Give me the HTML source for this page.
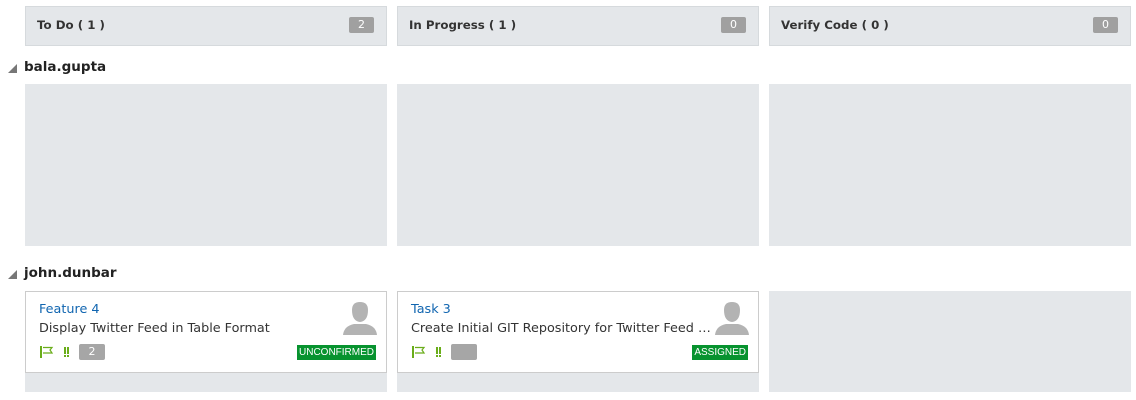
<!DOCTYPE html>
<html><head><style>
body{margin:0;width:1136px;height:400px;background:#fff;font-family:"DejaVu Sans","Liberation Sans",sans-serif;position:relative;overflow:hidden}
.a{position:absolute}
.hdr{top:6px;height:38px;width:360px;background:#e4e7ea;border:1px solid #d6dadd;box-sizing:content-box}
.hdr b{position:absolute;left:11px;top:11px;font-size:11.8px;color:#333}
.cnt{position:absolute;right:12px;top:10px;background:#a0a0a0;color:#fff;font-size:11px;width:25px;text-align:center;height:16px;border-radius:2px;line-height:15px}
.lane{background:#e4e7ea;width:362px}
.lbl{font-size:13.5px;font-weight:bold;color:#222}
.tri{width:0;height:0;border-left:9px solid transparent;border-bottom:9px solid #777}
.card{background:#fff;border:1px solid #ccc;width:360px;height:82px;box-sizing:border-box}
.card .t{position:absolute;left:13px;top:10px;font-size:12.8px;color:#1065b0}
.card .d{position:absolute;left:13px;top:29px;font-size:12.8px;color:#333;white-space:nowrap}
.st{position:absolute;right:10px;top:53px;background:#07932f;color:#fff;font-family:"Liberation Sans",sans-serif;font-size:10px;padding:1px 2px;line-height:13px}
.pill{position:absolute;left:53px;top:52px;width:26px;height:16px;background:#a6a6a6;border-radius:2px;color:#fff;font-size:11px;text-align:center;line-height:16px}
</style></head><body>
<div class="a hdr" style="left:25px"><b>To Do ( 1 )</b><span class="cnt">2</span></div>
<div class="a hdr" style="left:397px"><b>In Progress ( 1 )</b><span class="cnt">0</span></div>
<div class="a hdr" style="left:769px"><b>Verify Code ( 0 )</b><span class="cnt">0</span></div>

<div class="a tri" style="left:8px;top:64px"></div>
<div class="a lbl" style="left:24px;top:59px">bala.gupta</div>
<div class="a lane" style="left:25px;top:84px;height:162px"></div>
<div class="a lane" style="left:397px;top:84px;height:162px"></div>
<div class="a lane" style="left:769px;top:84px;height:162px"></div>

<div class="a tri" style="left:8px;top:270px"></div>
<div class="a lbl" style="left:24px;top:265px">john.dunbar</div>
<div class="a lane" style="left:25px;top:291px;height:101px"></div>
<div class="a lane" style="left:397px;top:291px;height:101px"></div>
<div class="a lane" style="left:769px;top:291px;height:101px"></div>

<div class="a card" style="left:25px;top:291px;width:362px">
<div class="t">Feature 4</div><div class="d">Display Twitter Feed in Table Format</div>
<svg class="a" style="left:316px;top:9px" width="36" height="36" viewBox="0 0 36 36"><path d="M10 9 Q10 1 18 1 Q26 1 26 9 Q26 20 18 21 Q10 20 10 9Z" fill="#b3b3b3"/><path d="M1 34 Q2 25 12 23 L24 23 Q34 25 35 34 Z" fill="#b3b3b3"/></svg>
<svg class="a" style="left:14px;top:54px" width="14" height="12"><rect x="0" y="0" width="2" height="12" fill="#6aad1a"/><path d="M3 1.5 H12 L10 4 L12 7 H3" fill="none" stroke="#6aad1a" stroke-width="1.2"/></svg>
<svg class="a" style="left:38px;top:55px" width="6" height="11"><rect x="0" y="0" width="2" height="7" fill="#6aad1a"/><rect x="3" y="0" width="2" height="7" fill="#6aad1a"/><rect x="0" y="8" width="2" height="2" fill="#6aad1a"/><rect x="3" y="8" width="2" height="2" fill="#6aad1a"/></svg>
<div class="pill">2</div><div class="st">UNCONFIRMED</div>
</div>

<div class="a card" style="left:397px;top:291px;width:362px">
<div class="t">Task 3</div><div class="d">Create Initial GIT Repository for Twitter Feed …</div>
<svg class="a" style="left:316px;top:9px" width="36" height="36" viewBox="0 0 36 36"><path d="M10 9 Q10 1 18 1 Q26 1 26 9 Q26 20 18 21 Q10 20 10 9Z" fill="#b3b3b3"/><path d="M1 34 Q2 25 12 23 L24 23 Q34 25 35 34 Z" fill="#b3b3b3"/></svg>
<svg class="a" style="left:14px;top:54px" width="14" height="12"><rect x="0" y="0" width="2" height="12" fill="#6aad1a"/><path d="M3 1.5 H12 L10 4 L12 7 H3" fill="none" stroke="#6aad1a" stroke-width="1.2"/></svg>
<svg class="a" style="left:38px;top:55px" width="6" height="11"><rect x="0" y="0" width="2" height="7" fill="#6aad1a"/><rect x="3" y="0" width="2" height="7" fill="#6aad1a"/><rect x="0" y="8" width="2" height="2" fill="#6aad1a"/><rect x="3" y="8" width="2" height="2" fill="#6aad1a"/></svg>
<div class="pill"></div><div class="st">ASSIGNED</div>
</div>
</body></html>
